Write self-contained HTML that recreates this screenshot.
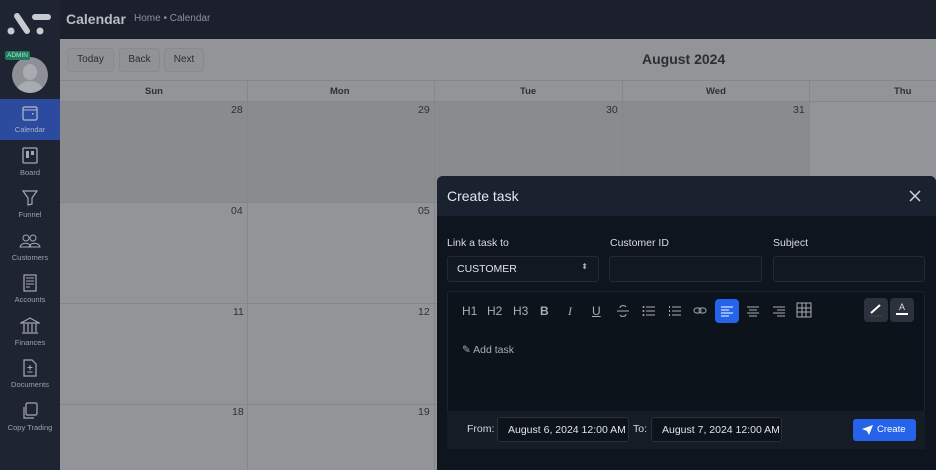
<!DOCTYPE html>
<html><head><style>
*{box-sizing:border-box;margin:0;padding:0}
body{width:936px;height:470px;overflow:hidden;background:#939498;font-family:"Liberation Sans",sans-serif;position:relative}
.side{position:absolute;left:0;top:0;width:60px;height:470px;background:#1e2432}
.top{position:absolute;left:60px;top:0;right:0;height:39px;background:#1b202c}
.top .t{position:absolute;left:6px;top:11px;color:#b9bcc3;font-weight:bold;font-size:14px}
.top .b{position:absolute;left:74px;top:13px;color:#8c919b;font-size:10px}
.nav{position:absolute;left:0;width:60px;text-align:center;color:#9ca1ab;font-size:7.5px}
.nav svg{display:block;margin:0 auto 3px}
.btn{position:absolute;top:48px;height:24px;border:1px solid #898a8e;border-radius:4px;background:#919296;color:#2a2c30;font-size:10px;line-height:22px;text-align:center}
.hd{position:absolute;top:80px;height:22px;border-top:1px solid #85868a;border-bottom:1px solid #85868a;left:60px;right:0}
.hd span{position:absolute;top:5px;font-size:9.5px;font-weight:bold;color:#2e3034}
.vl{position:absolute;top:80px;bottom:0;width:1px;background:#86878b}
.hl{position:absolute;left:60px;right:0;height:1px;background:#86878b}
.n{position:absolute;font-size:10.5px;color:#2e3034}
.modal{position:absolute;left:437px;top:176px;width:499px;height:294px;background:#0f151e;border-radius:6px 6px 0 0;overflow:hidden}
.mh{height:40px;background:#1a2230;color:#e5e7eb;font-size:14px;padding:12px 10px}
.lbl{position:absolute;top:61px;color:#d8dbe0;font-size:10.5px}
.inp{position:absolute;top:80px;height:26px;border:1px solid #232a35;border-radius:3px;background:#111821}
.ed{position:absolute;left:10px;top:115px;width:478px;height:158px;border:1px solid #1c232d;border-radius:3px;background:#0d131b}
.tb{position:absolute;top:12px;color:#a9adb5;font-size:12px}
.foot{position:absolute;background:#151c26}
.dt{position:absolute;top:6px;height:25px;border:1px solid #29303b;border-radius:3px;background:#0d131b;color:#e1e4e8;font-size:10.5px;padding:6px 10px;white-space:nowrap;overflow:hidden}
</style></head><body>
<div class="side">
<svg width="60" height="39" viewBox="0 0 60 39"><circle cx="11" cy="31" r="3.5" fill="#c7cad0"/><path d="M17 16 L27 31" stroke="#c7cad0" stroke-width="6" stroke-linecap="round"/><path d="M35 17 L48 17" stroke="#c7cad0" stroke-width="6" stroke-linecap="round"/><circle cx="40" cy="31" r="3.5" fill="#c7cad0"/></svg>
<div style="position:absolute;left:12px;top:57px;width:36px;height:36px;border-radius:50%;background:#8d9096;overflow:hidden"><div style="position:absolute;left:11px;top:7px;width:14px;height:16px;border-radius:50%;background:#a8abb0"></div><div style="position:absolute;left:5px;top:24px;width:26px;height:20px;border-radius:50%;background:#a8abb0"></div></div>
<div style="position:absolute;left:5px;top:51px;background:#1d7a5a;color:#b9e0cf;font-size:6.5px;padding:1px 2px;border-radius:2px">ADMIN</div>
<div style="position:absolute;left:0;top:99px;width:60px;height:41px;background:#2c4a9e"></div>
<div class="nav" style="top:104px"><svg width="18" height="18"><rect x="2" y="3" width="14" height="13" rx="1.5" fill="none" stroke="#b5bccc" stroke-width="1.2"/><line x1="2" y1="6" x2="16" y2="6" stroke="#b5bccc"/><rect x="11" y="9" width="1.5" height="1.5" fill="#b5bccc"/></svg><span style="color:#a9b3c9">Calendar</span></div>
<div class="nav" style="top:147px"><svg width="18" height="18"><rect x="2" y="1" width="14" height="15" rx="1" fill="none" stroke="#a4a8b0" stroke-width="1.3"/><rect x="5" y="4" width="3" height="7" fill="#a4a8b0"/><rect x="10" y="4" width="3" height="4" fill="#a4a8b0"/></svg>Board</div>
<div class="nav" style="top:189px"><svg width="18" height="18"><path d="M2 2H16L11 9V15L7 16V9Z" fill="none" stroke="#a4a8b0" stroke-width="1.2"/></svg>Funnel</div>
<div class="nav" style="top:232px"><svg width="22" height="18"><circle cx="7" cy="6" r="3" fill="none" stroke="#a4a8b0"/><circle cx="14" cy="6" r="3" fill="none" stroke="#a4a8b0"/><path d="M1 15C2 10 11 10 12 15Z M10 15C11 10 20 10 21 15Z" fill="none" stroke="#a4a8b0"/></svg>Customers</div>
<div class="nav" style="top:274px"><svg width="18" height="18"><rect x="3" y="1" width="12" height="16" fill="none" stroke="#a4a8b0" stroke-width="1.2"/><path d="M5 4H13M5 7H13M5 10H13M5 13H9" stroke="#a4a8b0"/></svg>Accounts</div>
<div class="nav" style="top:317px"><svg width="20" height="18"><path d="M1 6L10 1L19 6Z M2 16H18 M4 7V15 M8 7V15 M12 7V15 M16 7V15" fill="none" stroke="#a4a8b0" stroke-width="1.2"/></svg>Finances</div>
<div class="nav" style="top:359px"><svg width="18" height="18"><path d="M3 1H11L15 5V17H3Z" fill="none" stroke="#a4a8b0" stroke-width="1.2"/><path d="M9 6V11M6.5 8.5H11.5M6.5 13H11.5" stroke="#a4a8b0"/></svg>Documents</div>
<div class="nav" style="top:402px"><svg width="18" height="18"><rect x="5" y="1" width="11" height="12" rx="1.5" fill="none" stroke="#a4a8b0" stroke-width="1.2"/><path d="M3 5V16H13" fill="none" stroke="#a4a8b0" stroke-width="1.2"/></svg>Copy Trading</div>
</div>
<div class="top"><div class="t">Calendar</div><div class="b">Home • Calendar</div></div>
<div class="btn" style="left:67px;width:47px">Today</div>
<div class="btn" style="left:119px;width:41px">Back</div>
<div class="btn" style="left:164px;width:40px">Next</div>
<div style="position:absolute;left:642px;top:51px;font-size:14px;font-weight:bold;color:#2c2e33">August 2024</div>
<div style="position:absolute;left:60px;top:102px;width:749px;height:100px;background:#8a8b8f"></div>
<div class="hd"><span style="left:85px">Sun</span><span style="left:270px">Mon</span><span style="left:460px">Tue</span><span style="left:646px">Wed</span><span style="left:834px">Thu</span></div>
<div class="vl" style="left:247px"></div><div class="vl" style="left:434px"></div><div class="vl" style="left:622px"></div><div class="vl" style="left:809px"></div>
<div class="hl" style="top:202px"></div><div class="hl" style="top:303px"></div><div class="hl" style="top:404px"></div>
<div class="n" style="left:231px;top:104px">28</div><div class="n" style="left:418px;top:104px">29</div><div class="n" style="left:606px;top:104px">30</div><div class="n" style="left:793px;top:104px">31</div>
<div class="n" style="left:231px;top:205px">04</div><div class="n" style="left:418px;top:205px">05</div>
<div class="n" style="left:233px;top:306px">11</div><div class="n" style="left:418px;top:306px">12</div>
<div class="n" style="left:232px;top:406px">18</div><div class="n" style="left:418px;top:406px">19</div>
<div class="modal">
<div class="mh">Create task<svg style="position:absolute;right:15px;top:14px" width="12" height="12"><path d="M1 1L11 11M11 1L1 11" stroke="#cfd2d7" stroke-width="1.5"/></svg></div>
<div class="lbl" style="left:10px">Link a task to</div><div class="lbl" style="left:173px">Customer ID</div><div class="lbl" style="left:336px">Subject</div>
<div class="inp" style="left:10px;width:152px;color:#e1e4e8;font-size:10.5px;padding:6px 9px">CUSTOMER<span style="position:absolute;right:10px;top:5px;font-size:8px;color:#aaa">⬍</span></div>
<div class="inp" style="left:172px;width:153px"></div>
<div class="inp" style="left:336px;width:152px"></div>
<div class="ed">
<span class="tb" style="left:14px">H1</span><span class="tb" style="left:39px">H2</span><span class="tb" style="left:65px">H3</span><span class="tb" style="left:92px;font-weight:bold">B</span><span class="tb" style="left:120px;font-style:italic;font-family:'Liberation Serif'">I</span><span class="tb" style="left:144px;text-decoration:underline">U</span>
<svg style="position:absolute;left:168px;top:12px" width="14" height="14"><path d="M1 7H13M10 3C9 1 4 1 4 4M4 11C5 13 10 13 10 10" fill="none" stroke="#a9adb5"/></svg>
<svg style="position:absolute;left:194px;top:13px" width="14" height="12"><path d="M4 2H13M4 6H13M4 10H13" stroke="#a9adb5"/><circle cx="1.5" cy="2" r="1" fill="#a9adb5"/><circle cx="1.5" cy="6" r="1" fill="#a9adb5"/><circle cx="1.5" cy="10" r="1" fill="#a9adb5"/></svg>
<svg style="position:absolute;left:220px;top:13px" width="14" height="12"><path d="M4 2H13M4 6H13M4 10H13M1.5 1V3M1.5 5V7M1.5 9V11" stroke="#a9adb5"/></svg>
<svg style="position:absolute;left:245px;top:14px" width="14" height="10"><rect x="1" y="2" width="7" height="5" rx="2.5" fill="none" stroke="#a9adb5"/><rect x="6" y="2" width="7" height="5" rx="2.5" fill="none" stroke="#a9adb5"/></svg>
<div style="position:absolute;left:267px;top:7px;width:24px;height:24px;border-radius:4px;background:#2563eb"></div>
<svg style="position:absolute;left:272px;top:13px" width="14" height="12"><path d="M1 2H13M1 5H9M1 8H13M1 11H9" stroke="#fff"/></svg>
<svg style="position:absolute;left:298px;top:13px" width="14" height="12"><path d="M1 2H13M3 5H11M1 8H13M3 11H11" stroke="#a9adb5"/></svg>
<svg style="position:absolute;left:324px;top:13px" width="14" height="12"><path d="M1 2H13M5 5H13M1 8H13M5 11H13" stroke="#a9adb5"/></svg>
<svg style="position:absolute;left:348px;top:10px" width="16" height="16"><path d="M1 1H15V15H1Z M1 6H15M1 10H15M6 1V15M10 1V15" fill="none" stroke="#a9adb5"/></svg>
<div style="position:absolute;left:416px;top:6px;width:24px;height:24px;border-radius:4px;background:#2b323d"></div>
<svg style="position:absolute;left:421px;top:11px" width="14" height="14"><path d="M2 10L11 2" stroke="#fff" stroke-width="2"/><path d="M1 13H13" stroke="#444"/></svg>
<div style="position:absolute;left:442px;top:6px;width:24px;height:24px;border-radius:4px;background:#2b323d;color:#ddd;font-size:9px;text-align:center;padding-top:4px">A<div style="margin:1px auto;width:12px;height:2px;background:#fff"></div></div>
<div style="position:absolute;left:14px;top:52px;color:#a9adb5;font-size:10.5px">✎ Add task</div>
</div>
<div class="foot" style="top:235px;left:10px;right:11px;height:38px">
<span style="position:absolute;left:20px;top:12px;color:#d5d8dd;font-size:10.5px">From:</span>
<div class="dt" style="left:50px;width:132px">August 6, 2024 12:00 AM</div>
<span style="position:absolute;left:186px;top:12px;color:#d5d8dd;font-size:10.5px">To:</span>
<div class="dt" style="left:204px;width:131px">August 7, 2024 12:00 AM</div>
<div style="position:absolute;left:406px;top:8px;width:63px;height:22px;background:#2563eb;border-radius:3px;color:#fff;font-size:9.5px;padding:5px 0 0 24px">Create<svg style="position:absolute;left:9px;top:6px" width="11" height="10"><path d="M0 4L11 0L7 10L5 6Z" fill="#fff"/></svg></div>
</div>
</div>
</body></html>
